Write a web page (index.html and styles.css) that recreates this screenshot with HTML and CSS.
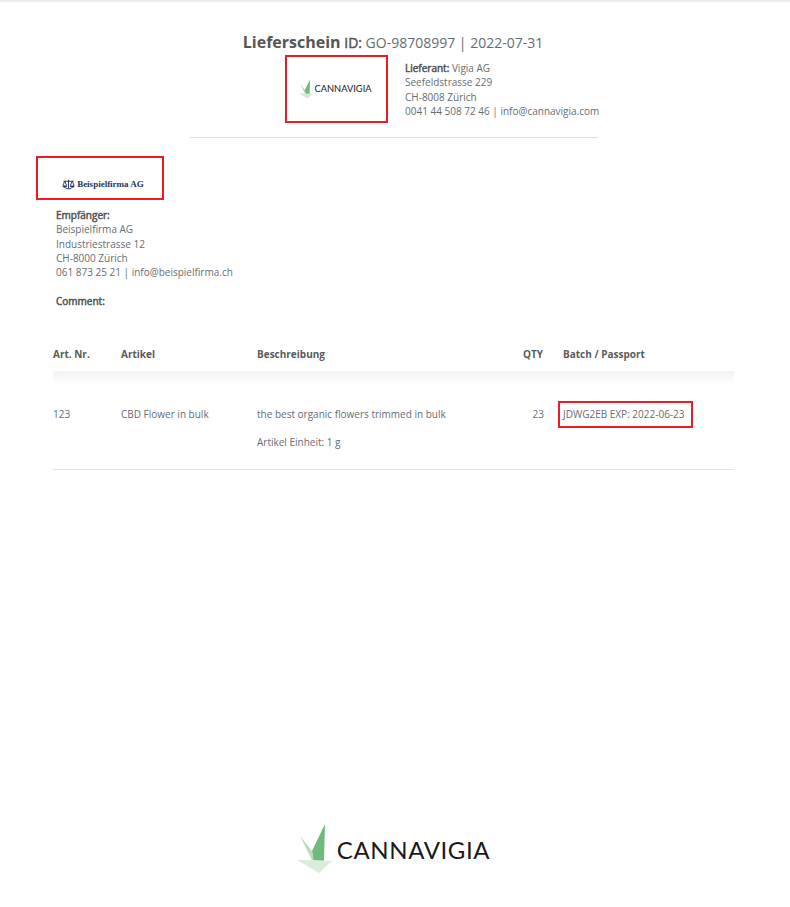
FILE: index.html
```html
<!DOCTYPE html>
<html lang="de">
<head>
<meta charset="utf-8">
<title>Lieferschein</title>
<link rel="stylesheet" href="styles.css">
</head>
<body>
<div class="page">
  <header class="head">
    <h1 class="title"><span class="title-main">Lieferschein</span> <span class="faux">ID:</span> GO-98708997 | 2022-07-31</h1>
    <div class="head-row">
      <div class="logo-box">
        <svg class="leaf-small" viewBox="0 0 38 51" aria-hidden="true">
          <polygon points="28,1 27,38 17,41 15,28" fill="#6fbb7b"/>
          <polygon points="3,13 15,28 17,41" fill="#b5d9b4"/>
          <polygon points="0,37 17,37 35,38 22,50" fill="#d5e8d5"/>
        </svg>
        <span class="wordmark-small">CANNAVIGIA</span>
      </div>
      <div class="address">
        <div><span class="faux">Lieferant:</span> Vigia AG</div>
        <div>Seefeldstrasse 229</div>
        <div>CH-8008 Zürich</div>
        <div>0041 44 508 72 46 | info@cannavigia.com</div>
      </div>
    </div>
    <hr class="rule">
  </header>

  <div class="client-logo-box">
    <svg class="scale" viewBox="0 0 14 11" aria-hidden="true">
      <path d="M7 .5V9.5M4 10h6M1.500 2h11M3 2 1 6.500M3 2l2 4.500M11 2 9 6.500M11 2l2 4.500" fill="none" stroke="#1c2f5c" stroke-width="1"/>
      <path d="M.5 6.500h5a2.500 2.500 0 0 1-5 0zM8.500 6.500h5a2.500 2.500 0 0 1-5 0z" fill="#1c2f5c"/>
    </svg>
    <span class="client-name">Beispielfirma AG</span>
  </div>

  <div class="recipient">
    <div class="faux">Empfänger:</div>
    <div>Beispielfirma AG</div>
    <div>Industriestrasse 12</div>
    <div>CH-8000 Zürich</div>
    <div>061 873 25 21 | info@beispielfirma.ch</div>
    <div class="faux comment">Comment:</div>
  </div>

  <table class="items">
    <thead>
      <tr>
        <th class="c-nr">Art. Nr.</th>
        <th class="c-art">Artikel</th>
        <th class="c-desc">Beschreibung</th>
        <th class="c-qty">QTY</th>
        <th class="c-batch">Batch / Passport</th>
      </tr>
    </thead>
    <tbody>
      <tr>
        <td>123</td>
        <td>CBD Flower in bulk</td>
        <td>
          <div>the best organic flowers trimmed in bulk</div>
          <div class="unit">Artikel Einheit: 1 g</div>
        </td>
        <td class="c-qty">23</td>
        <td><div class="batch-box">JDWG2EB EXP: 2022-06-23</div></td>
      </tr>
    </tbody>
  </table>

  <footer class="foot">
    <svg class="leaf-big" viewBox="0 0 38 51" aria-hidden="true">
      <polygon points="28,1 27,38 17,41 15,28" fill="#6fbb7b"/>
      <polygon points="3,13 15,28 17,41" fill="#bcdcb9"/>
      <polygon points="0,37 17,37 35,38 22,50" fill="#dcecdc"/>
    </svg>
    <span class="wordmark-big">CANNAVIGIA</span>
  </footer>
</div>
</body>
</html>
```
FILE: styles.css
```css
* { box-sizing: border-box; }
html, body { margin: 0; padding: 0; background: #fff; }
body {
  font-family: "Open Sans", "Liberation Sans", sans-serif;
  font-size: 10px;
  line-height: 14.3px;
  color: #666c73;
}
.page {
  height: 907px;
  padding-top: 32px;
  background: linear-gradient(#e4e4e4, #fff 3px);
  overflow: hidden;
}
.faux {
  font-weight: 400;
  color: #555;
  -webkit-text-stroke: 0.5px #555;
}
.head { width: 408px; margin-left: 190px; }
.title {
  margin: 0;
  width: 406px;
  font-size: 14px;
  font-weight: 400;
  line-height: 20px;
  text-align: center;
  white-space: nowrap;
}
.title-main { font-size: 16px; font-weight: 700; color: #555; }
.head-row {
  display: flex;
  align-items: flex-start;
  gap: 17px;
  margin-top: 2px;
  margin-left: 95px;
}
.logo-box {
  width: 103px;
  height: 68px;
  padding-right: 2px;
  border: 2px solid #ed1c24;
  display: flex;
  align-items: center;
  justify-content: center;
  flex: none;
}
.leaf-small { width: 15px; height: 20px; flex: none; }
.wordmark-small {
  font-family: "Lato", "Liberation Sans", sans-serif;
  font-weight: 400;
  font-size: 9.300px;
  color: #222;
}
.address { padding-top: 6px; white-space: nowrap; }
.rule {
  margin: 14px 0 0;
  border: 0;
  border-top: 1px solid #ddd;
}
.client-logo-box {
  width: 128px;
  height: 44px;
  margin: 18px 0 0 36px;
  border: 2px solid #ed1c24;
  display: flex;
  align-items: flex-end;
  justify-content: center;
  gap: 2px;
  padding: 0 0 7px 6px;
}
.scale { width: 13px; height: 11px; margin-bottom: 1px; flex: none; }
.client-name {
  font-family: "Liberation Serif", serif;
  font-weight: 700;
  font-size: 9px;
  line-height: 13px;
  color: #24365f;
  white-space: nowrap;
}
.recipient { margin: 8px 0 0 56px; }
.comment { margin-top: 15px; }
.items {
  width: 681px;
  margin: 29px 0 0 53px;
  border-collapse: collapse;
  table-layout: fixed;
}
.items th {
  height: 33px;
  padding: 0;
  text-align: left;
  font-size: 10px;
  font-weight: 700;
  color: #5a5a5a;
  vertical-align: middle;
}
.c-nr { width: 68px; }
.c-art { width: 136px; }
.c-desc { width: 236px; }
.items th.c-qty { width: 51px; padding-right: 1px; text-align: right; }
.items td.c-qty { text-align: right; }
.items th.c-batch { padding-left: 19px; }
.items tbody tr {
  background: linear-gradient(#f3f3f3, #fff 15px);
  border-bottom: 1px solid #e2e2e2;
}
.items td {
  height: 99px;
  padding: 36px 0 0;
  vertical-align: top;
}
.unit { margin-top: 13.700px; }
.batch-box {
  width: fit-content;
  margin: -6px 0 0 14px;
  padding: 4px 6px 4.700px 3px;
  border: 2px solid #ed1c24;
  white-space: nowrap;
}
.foot {
  margin-top: 354px;
  display: flex;
  justify-content: center;
  align-items: center;
  gap: 2px;
  padding-right: 3px;
}
.leaf-big { width: 38px; height: 51px; margin-top: -2px; flex: none; }
.wordmark-big {
  font-family: "Lato", "Liberation Sans", sans-serif;
  font-weight: 400;
  font-size: 24px;
  line-height: 51px;
  letter-spacing: 0.6px;
  color: #1a1a1a;
}
```
